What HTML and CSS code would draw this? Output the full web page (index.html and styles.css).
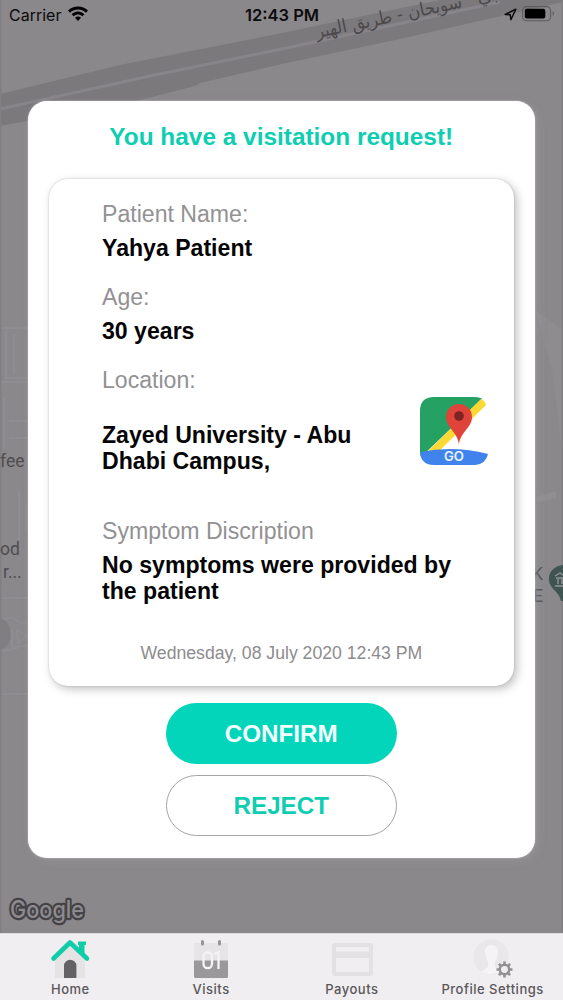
FILE: index.html
```html
<!DOCTYPE html>
<html lang="en">
<head>
<meta charset="utf-8">
<title>Visitation request</title>
<link rel="stylesheet" href="styles.css">
</head>
<body>
<div class="screen">
  <svg class="map" viewBox="0 0 563 934" aria-hidden="true">
    <rect width="563" height="934" fill="#8a888a"/>
    <path d="M0 94L120 65 282 33 440 0H563V2L400 39 282 64 200 83 195 86 140 100 0 126Z" fill="#7b797c"/>
    <path d="M0 109L150 76 282 49 500 2" fill="none" stroke="#87858a" stroke-width="3"/>
    <g fill="none" stroke="#8f8d91" stroke-width="2">
      <path d="M2 328H28M6 331V378H28M14 334V374M0 382H28M4 398V448M9 421H28M9 438H28M19 490V540M26 505V530M0 598H28M2 620L12 617 20 623 28 622M12 630V648L28 645M2 651L18 648M17 630L27 636 18 643ZM0 694H28"/>
    </g>
    <path d="M0 618C14 622 14 645 2 649H0Z" fill="#807e81"/>
    <path d="M535 310L552 370 563 460V330Z" fill="#8e8c8f"/>
    <path d="M536 497L556 491V499L537 502Z" fill="#908e91"/>
    <path d="M0 0V934M563 0V934" stroke="#817f82" stroke-width="3"/>
    <g transform="rotate(-11.800 317 38)">
      <text class="map-road" x="317" y="38" textLength="149" lengthAdjust="spacingAndGlyphs">سويحان - طريق الهير</text>
      <text class="map-road" x="482" y="37">بي</text>
    </g>
    <g class="map-place">
      <text x="0" y="467">fee</text>
      <text x="0" y="555">od</text>
      <text x="3" y="578">r...</text>
      <text x="532" y="580">K</text>
      <text x="533" y="602">E</text>
    </g>
    <path d="M563 565C553 566 548 573 549 581C550 589 559 591 561 601H563Z" fill="#405451"/>
    <path d="M555 576L560 573 563 575M556 578H563M558 579V584M562 579V584M555 586H563" stroke="#929697" fill="none" stroke-width="1.4"/>
    <text class="map-logo" x="10" y="918" textLength="74" lengthAdjust="spacingAndGlyphs">Google</text>
  </svg>

  <header class="status">
    <div class="status-side">
      <span class="carrier">Carrier</span>
      <svg class="wifi" viewBox="0 0 20 15"><path d="M0 4.5C5.5-1 14.5-1 20 4.5L17.9 6.7C13.6 2.5 6.4 2.5 2.1 6.7ZM3.6 8.2C7.4 4.5 12.6 4.5 16.4 8.2L14.3 10.3C11.8 8 8.2 8 5.7 10.3ZM7 11.7C8.8 10 11.2 10 13 11.7L10 15Z"/></svg>
    </div>
    <div class="clock">12:43 PM</div>
    <div class="status-side status-end">
      <svg class="arrow" viewBox="0 0 13 13"><path d="M1.2 6.5L11.8 1.2 6.9 11.7 6.3 6.8Z"/></svg>
      <svg class="battery" viewBox="0 0 33 16"><rect x=".6" y=".6" width="28" height="14.2" rx="4" fill="none" stroke="#5d5b5e" stroke-width="1.1"/><rect x="2.8" y="2.8" width="20.5" height="9.8" rx="2"/><path d="M30.7 5Q33.2 7.5 30.7 10Z" fill="#5d5b5e"/></svg>
    </div>
  </header>

  <main class="dialog">
    <h1 class="title">You have a visitation request!</h1>
    <section class="card">
      <dl class="details">
        <div class="field"><dt>Patient Name:</dt><dd>Yahya Patient</dd></div>
        <div class="field"><dt>Age:</dt><dd>30 years</dd></div>
        <div class="field"><dt>Location:</dt>
          <dd class="location">
            <span class="address">Zayed University - Abu<br>Dhabi Campus,</span>
            <svg class="maps-icon" viewBox="0 0 68 68">
              <defs><clipPath id="tile"><path d="M14 0H54Q61 0 66 4V55Q68 56 68 57Q66 68 55 68H14Q0 68 0 54V14Q0 0 14 0Z"/></clipPath></defs>
              <g clip-path="url(#tile)">
                <rect width="68" height="68" fill="#fff"/>
                <path d="M0 0H64L0 61Z" fill="#25a263"/>
              </g>
              <path d="M6 56L61 2Q65 4 66 8L15 58Z" fill="#fdd835"/>
              <path d="M0 55Q34 48 68 57Q66 67 55 68H14Q1 68 0 55Z" fill="#4083ec"/>
              <path d="M39 48C38 35 26 31 26 20A13 13 0 0 1 52 20C52 31 40 35 39 48Z" fill="#e0433a"/>
              <circle cx="39" cy="19" r="4.8" fill="#7c2422"/>
              <text class="go" x="24" y="63.5" textLength="20" lengthAdjust="spacingAndGlyphs">GO</text>
            </svg>
          </dd>
        </div>
        <div class="field symptoms"><dt>Symptom Discription</dt><dd>No symptoms were provided by<br>the patient</dd></div>
      </dl>
      <time class="date">Wednesday, 08 July 2020 12:43 PM</time>
    </section>
    <div class="actions">
      <button class="button confirm">CONFIRM</button>
      <button class="button reject">REJECT</button>
    </div>
  </main>

  <nav class="tabs">
    <a class="tab">
      <svg class="tab-icon" viewBox="0 0 44 40"><path d="M7 19L22 6 37 19V40H7Z" fill="#e5e3e4"/><path d="M30 3.500H38V7H36.500V18L31 13V7H30Z" fill="#0fcda9"/><path d="M5.500 20.500L22 4.500 39 20.500" fill="none" stroke="#0fcda9" stroke-width="4.600" stroke-linecap="round" stroke-linejoin="round"/><path d="M16 40V28A6.200 6.200 0 0 1 28.400 28V40Z" fill="#646264"/></svg>
      <span>Home</span>
    </a>
    <a class="tab">
      <svg class="tab-icon" viewBox="0 0 44 40"><path d="M5 5H39V23H5Z" fill="#e6e4e6"/><path d="M5 22.500H39V38.500Q39 40 37.500 40H6.500Q5 40 5 38.500Z" fill="#9a989a"/><path d="M13.500 3.500V6M30.500 3.500V6" stroke="#969496" stroke-width="3" stroke-linecap="round"/><rect x="14.500" y="14.500" width="8.500" height="15.500" rx="4" fill="none" stroke="#f5f3f5" stroke-width="2.300"/><path d="M25.500 16L29.500 14V31" fill="none" stroke="#f5f3f5" stroke-width="2.300"/></svg>
      <span>Visits</span>
    </a>
    <a class="tab">
      <svg class="tab-icon" viewBox="0 0 44 40"><rect x="4" y="7" width="37" height="29" rx="1" fill="none" stroke="#e3e1e3" stroke-width="4"/><path d="M4 13.500H41V20H4Z" fill="#e3e1e3"/></svg>
      <span>Payouts</span>
    </a>
    <a class="tab profile">
      <svg class="tab-icon" viewBox="0 0 44 40"><circle cx="20" cy="19" r="17.500" fill="#e9e7e9"/><path d="M14 13C14 5 27 5 27 13C27 19 25 23 24 24V29L30 33Q20 39 10 34L17 29V24Q14 20 14 13Z" fill="#f5f3f5"/><g transform="translate(-1 1)"><circle cx="34.500" cy="30.500" r="7.500" fill="#efedef"/><circle cx="34.500" cy="30.500" r="4.700" fill="none" stroke="#929092" stroke-width="2.500"/><path d="M34.500 22.500V26M34.500 35V38.500M26.500 30.500H30M39 30.500H42.500M28.900 24.900L31.200 27.200M37.800 33.800L40.100 36.100M28.900 36.100L31.200 33.800M37.800 27.200L40.100 24.900" stroke="#929092" stroke-width="2.600"/></g></svg>
      <span>Profile Settings</span>
    </a>
  </nav>
</div>
</body>
</html>
```
FILE: styles.css
```css
* { box-sizing: border-box; }
body { margin: 0; font-family: "Liberation Sans", Arial, sans-serif; }
.screen {
  position: relative;
  width: 563px;
  height: 1000px;
  display: flex;
  flex-direction: column;
  overflow: hidden;
  background: #8a888a;
}
.map { position: absolute; left: 0; top: 0; width: 563px; height: 934px; }
.map-road { font: 18.500px "DejaVu Sans", "Noto Sans", sans-serif; fill: #4b494c; }
.map-place { font: 17.5px Roboto, sans-serif; fill: #4f4d50; }
.map-logo {
  font: 500 24px Inter, sans-serif;
  fill: #8d8b8e;
  stroke: #444246;
  stroke-width: 4.500px;
  stroke-linejoin: round;
  paint-order: stroke;
}

.status {
  position: relative;
  display: grid;
  grid-template-columns: 1fr auto 1fr;
  align-items: center;
  height: 28px;
  padding: 0 8px 0 9px;
  color: #0c0b0d;
  font-family: Inter, sans-serif;
}
.status-side { display: flex; align-items: center; }
.status-end { justify-content: flex-end; gap: 5px; }
.carrier { font-size: 16px; width: 59px; margin-top: 2px; }
.wifi { width: 20px; height: 15px; margin-top: -2px; }
.clock { font-size: 16.500px; font-weight: 600; margin-top: 2px; }
.arrow { width: 13px; height: 13px; fill: none; stroke: #0c0b0d; stroke-width: 1.500; stroke-linejoin: round; }
.battery { width: 33px; height: 16px; }

.dialog {
  position: relative;
  width: 507.500px;
  height: 757px;
  margin: 73px 0 0 27.500px;
  padding: 0 21px;
  border-radius: 19px;
  background: #fff;
  box-shadow: 0 0 2px #c4c2c4, 3px 3px 8px rgba(160,158,160,.45);
}
.title {
  margin: 0;
  padding-top: 22px;
  height: 78px;
  font-size: 24.400px;
  line-height: 28px;
  text-align: center;
  white-space: nowrap;
  color: #0dceb1;
}
.card {
  height: 507px;
  padding: 22px 26px 0 53.500px;
  border-radius: 19px;
  background: #fff;
  box-shadow: 0 0 2px rgba(0,0,0,.2), 3px 3px 10px rgba(0,0,0,.25);
}
.details { margin: 0; font-size: 23.100px; line-height: 26px; }
.field { margin-bottom: 23px; }
.field dt { color: #929193; margin-bottom: 8px; }
.field dd { margin: 0; font-weight: bold; color: #050505; }
.details .location { display: flex; justify-content: space-between; height: 98px; margin-top: -4px; }
.address { padding-top: 25px; }
.maps-icon { width: 68px; height: 68px; }
.go { font: 600 12.500px Inter, sans-serif; fill: #eaf4ff; }
.symptoms { margin-bottom: 36px; white-space: nowrap; }
.date { display: block; margin-left: 38.500px; font-size: 17.650px; line-height: 26px; color: #8d8c8e; white-space: nowrap; }
.actions { display: flex; flex-direction: column; align-items: center; gap: 11px; padding-top: 17px; }
.button {
  width: 231px;
  height: 61px;
  border: 0;
  border-radius: 31px;
  font: bold 24.200px "Liberation Sans", Arial, sans-serif;
}
.confirm { background: #03d5bb; color: #f2fffd; }
.reject { background: #fff; border: 1.500px solid #a6a4a6; color: #10cdb1; }

.tabs {
  position: relative;
  display: grid;
  grid-template-columns: repeat(4, 1fr);
  height: 67px;
  margin-top: auto;
  padding-top: 4px;
  border-top: 1px solid #dfdddf;
  background: #f0eef0;
}
.tab {
  display: flex;
  flex-direction: column;
  align-items: center;
  gap: 2px;
  color: #59575a;
  font: 500 13px/18px Inter, sans-serif;
  letter-spacing: .5px;
  white-space: nowrap;
}
.tab-icon { width: 44px; height: 40px; }
```
